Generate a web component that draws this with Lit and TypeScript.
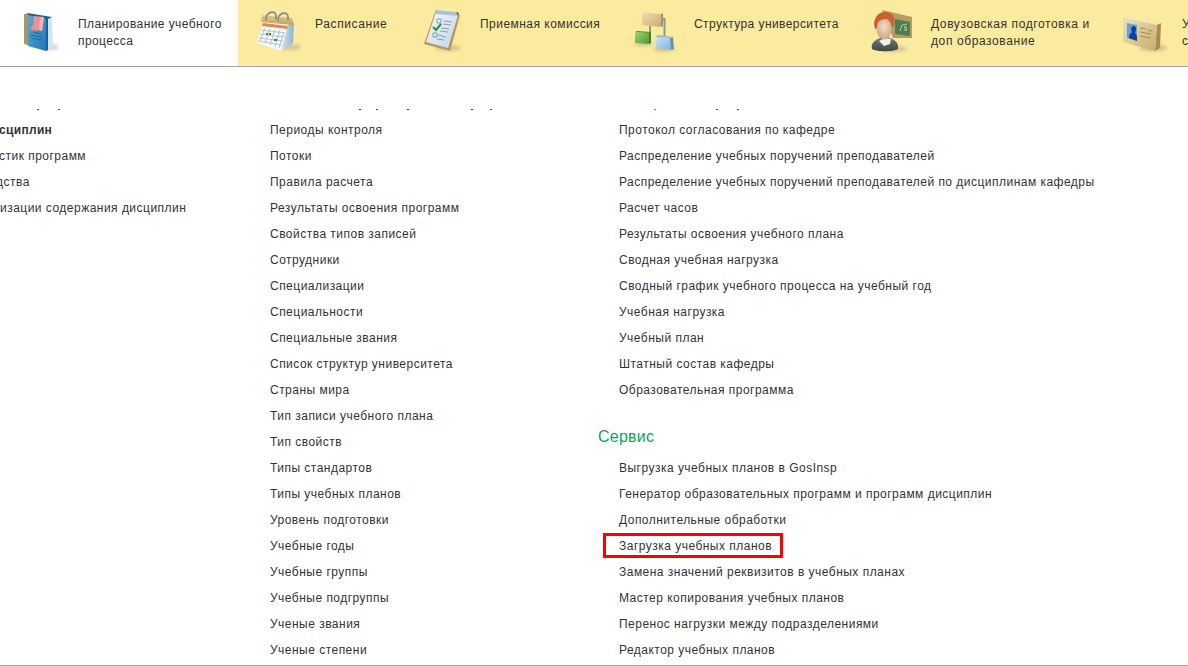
import { LitElement, html, css, svg } from "lit";
import { customElement } from "lit/decorators.js";

const shadow = (cx: number, cy: number, rx: number, ry: number) =>
  svg`<ellipse cx=${cx} cy=${cy} rx=${rx} ry=${ry} fill="#8a8578" opacity=".35" filter="url(#soft)"/>`;

const defs = svg`<defs>
  <filter id="soft" x="-40%" y="-60%" width="180%" height="220%"><feGaussianBlur stdDeviation="1.6"/></filter>
  <linearGradient id="bookBlue" x1="0" y1="0" x2="1" y2="1"><stop offset="0" stop-color="#58a9d6"/><stop offset="1" stop-color="#1f78b4"/></linearGradient>
  <linearGradient id="gold" x1="0" y1="0" x2="0" y2="1"><stop offset="0" stop-color="#e2cb8c"/><stop offset="1" stop-color="#c0a25c"/></linearGradient>
  <linearGradient id="side" x1="0" y1="0" x2="1" y2="0"><stop offset="0" stop-color="#d5e4f2"/><stop offset="1" stop-color="#8eb2d2"/></linearGradient>
  <linearGradient id="green" x1="0" y1="0" x2="1" y2="1"><stop offset="0" stop-color="#9fd66c"/><stop offset="1" stop-color="#4f9a32"/></linearGradient>
  <linearGradient id="blue" x1="0" y1="0" x2="1" y2="1"><stop offset="0" stop-color="#cfe5f7"/><stop offset="1" stop-color="#7fb2dc"/></linearGradient>
  <linearGradient id="tan" x1="0" y1="0" x2="1" y2="1"><stop offset="0" stop-color="#f0e0b0"/><stop offset="1" stop-color="#c7ad70"/></linearGradient>
  <linearGradient id="paper" x1="0" y1="0" x2="1" y2="1"><stop offset="0" stop-color="#f4f8fc"/><stop offset="1" stop-color="#bcd6ec"/></linearGradient>
  <radialGradient id="skin" cx=".5" cy=".4" r=".7"><stop offset="0" stop-color="#f6dcc6"/><stop offset="1" stop-color="#c99a7c"/></radialGradient>
  <linearGradient id="cloth" x1="0" y1="0" x2="0" y2="1"><stop offset="0" stop-color="#757b78"/><stop offset="1" stop-color="#3f4644"/></linearGradient>
</defs>`;

const bookIcon = svg`
  ${shadow(50, 47, 9, 3)}
  <path d="M46 18 52 17 53 46 46 51Z" fill="#d7e4ef"/>
  <path d="M27 13 52 17 46 20 28 16Z" fill="#1b5f9e"/>
  <path d="M24 14 28 14 28 45 24 44Z" fill="#a19a66"/>
  <path d="M28 15 46 19 46 51 28 46Z" fill="url(#bookBlue)"/>
  <path d="M46 19 48 18 48 50 46 51Z" fill="#14609f"/>
  <path d="M30 35 42 37M31 38 42 40M33 32 41 34" stroke="#1a5d92" stroke-width=".8"/>
  <path d="M34 16 44 17 42 31 38 30 36 31 30 29 33 25Z" fill="#f28f8f"/>
  <path d="M40 17 44 17 42 31 39 30Z" fill="#f7b3ad"/>`;

const calIcon = svg`
  ${shadow(290, 47, 11, 3)}
  <path d="M288 24 294 23 293 43 281 51Z" fill="url(#side)"/>
  <path d="M263 22 288 25 281 51 257 43Z" fill="#f5f8fb"/>
  <path d="M263 23 288 26 287 29 262 26Z" fill="#d98a4c"/>
  <g stroke="#a9b8c4" stroke-width=".8" fill="none">
    <path d="M261 30 285 33M260 34 284 37M259 38 283 41M258 41 282 45"/>
    <path d="M265 28 260 41M270 29 265 43M275 30 270 45M280 30 275 47M284 32 279 48"/>
  </g>
  <path d="M266 33h2v2h-2zM269 33h2v2h-2zM274 39h3v2h-3z" fill="#3f8f3a"/>
  <path d="M262 15 292 18 294 25 261 22Z" fill="url(#gold)"/>
  <path d="M266 20c-1-8 10-11 10-4v3M278 21c-1-8 10-11 10-4v3" stroke="#7f8a8f" stroke-width="1.7" fill="none"/>`;

const clipIcon = svg`
  ${shadow(448, 48, 13, 3)}
  <path d="M435 12 460 15 450 51 424 44Z" fill="#c0935e"/>
  <path d="M436 12 458 15 448 48 426 42Z" fill="url(#paper)"/>
  <path d="M435 10 456 12 459 16 435 14Z" fill="#a9c2d6"/>
  <path d="M456 12 459 13 458 16Z" fill="#4c5a60"/>
  <g fill="none" stroke="#7f95a6" stroke-width=".9">
    <path d="M437 19h4v4h-4zM433 33h4v4h-4z"/>
    <path d="M444 21 452 22M443 24 451 25M441 28 449 29M440 31 448 32M438 35 446 37M437 39 444 40"/>
  </g>
  <path d="M433 27 436 30 441 24" fill="none" stroke="#2f8f2b" stroke-width="2"/>`;

const structIcon = svg`
  ${shadow(664, 49, 11, 3)}
  ${shadow(644, 44, 10, 2)}
  <path d="M660 19h4.5v18M650 26v8" fill="none" stroke="#8b979b" stroke-width="2"/>
  <path d="M642 12 661 14 661 27 642 25Z" fill="url(#tan)"/>
  <path d="M661 14 663 13 663 26 661 27Z" fill="#a89260"/>
  <path d="M642 12 644 11 663 13 661 14Z" fill="#f2e6c2"/>
  <path d="M635 32 649 33 649 44 635 43Z" fill="url(#green)"/>
  <path d="M649 33 651 32 651 43 649 44Z" fill="#3d7f28"/>
  <path d="M635 32 637 31 651 32 649 33Z" fill="#4c8f30"/>
  <path d="M655 37 670 38 671 50 656 48Z" fill="url(#blue)"/>
  <path d="M670 38 673 37 674 49 671 50Z" fill="#6c8fa8"/>
  <path d="M655 37 658 35 673 37 670 38Z" fill="#9db9cd"/>`;

const teacherIcon = svg`
  <path d="M882 10 912 17 912 38 893 38Z" fill="#b49b68"/>
  <path d="M895 19 910 22 910 36 895 34Z" fill="#4f7d4c"/>
  <path d="M900 31 902 25 907 24M904 30h3l-3-3h3" stroke="#cfe0c8" stroke-width=".8" fill="none"/>
  ${shadow(893, 49, 14, 3)}
  <path d="M872 49c-2-7 5-10 11-12h4c7 2 12 5 11 12-5 3-21 3-26 0Z" fill="url(#cloth)"/>
  <path d="M879 41 885 38 891 39 890 44 884 46Z" fill="#eef1ee"/>
  <ellipse cx="884" cy="29" rx="7.5" ry="10.5" fill="url(#skin)"/>
  <path d="M875 29c-3-9 2-17 10-17 7 0 11 5 9 13l-2 3c0-5-2-8-5-9-4 0-8 1-9 4-1 2-1 7-3 6Z" fill="#c8622f"/>`;

const cardIcon = svg`
  ${shadow(1153, 48, 14, 3.5)}
  <path d="M1123 18 1127 16 1161 23 1157 25Z" fill="#f3e6bb"/>
  <path d="M1157 25 1161 23 1160 48 1155 51Z" fill="#a88c4f"/>
  <path d="M1123 18 1157 25 1155 51 1123 42Z" fill="url(#tan)"/>
  <path d="M1127 23 1137 25 1137 41 1127 38Z" fill="#5da3dc"/>
  <path d="M1129 38c0-4 2-5 3-6-2-4 0-6 2-6s3 3 1 7c1 1 2 2 2 4v4Z" fill="#173f9a"/>
  <path d="M1140 28 1146 29M1148 30 1152 31M1140 32 1151 34M1140 36 1150 38" stroke="#a48d55" stroke-width="1.1"/>`;

const tabs = [
  { lines: ["Планирование учебного", "процесса"], start: 0, w: 238, ls: 0.42, icon: bookIcon, active: true },
  { lines: ["Расписание"], start: 238, w: 165, ls: 0.62, icon: calIcon },
  { lines: ["Приемная комиссия"], start: 403, w: 214, ls: 0.47, icon: clipIcon },
  { lines: ["Структура университета"], start: 617, w: 237, ls: 0.42, icon: structIcon },
  { lines: ["Довузовская подготовка и", "доп образование"], start: 854, w: 251, ls: 0.6, icon: teacherIcon },
  { lines: ["Учебные", "сотрудники"], start: 1105, w: 180, ls: 0.5, icon: cardIcon },
];

const specks = [
  { x: 37, c: "#3c3c50" }, { x: 58, c: "#3c3c50" }, { x: 359, c: "#3c3c50" }, { x: 376, c: "#3c3c50" },
  { x: 407, c: "#3c3c50" }, { x: 471, c: "#3c3c50" }, { x: 490, c: "#3c3c50" },
  { x: 654, c: "#c0503c" }, { x: 716, c: "#3c3c50" }, { x: 737, c: "#3c3c50" },
];

const left = [
  { t: "сциплин", b: true, m: -1 },
  { t: "стик программ", m: -1 },
  { t: "дства", m: -4 },
  { t: "изации содержания дисциплин", m: 0 },
];
const middle = [
  "Периоды контроля", "Потоки", "Правила расчета", "Результаты освоения программ", "Свойства типов записей",
  "Сотрудники", "Специализации", "Специальности", "Специальные звания", "Список структур университета",
  "Страны мира", "Тип записи учебного плана", "Тип свойств", "Типы стандартов", "Типы учебных планов",
  "Уровень подготовки", "Учебные годы", "Учебные группы", "Учебные подгруппы", "Ученые звания", "Ученые степени",
];
const reports = [
  "Протокол согласования по кафедре", "Распределение учебных поручений преподавателей",
  "Распределение учебных поручений преподавателей по дисциплинам кафедры", "Расчет часов",
  "Результаты освоения учебного плана", "Сводная учебная нагрузка",
  "Сводный график учебного процесса на учебный год", "Учебная нагрузка", "Учебный план",
  "Штатный состав кафедры", "Образовательная программа",
];
const service = [
  "Выгрузка учебных планов в GosInsp", "Генератор образовательных программ и программ дисциплин",
  "Дополнительные обработки", "Загрузка учебных планов", "Замена значений реквизитов в учебных планах",
  "Мастер копирования учебных планов", "Перенос нагрузки между подразделениями", "Редактор учебных планов",
];

@customElement("app-root")
export class AppRoot extends LitElement {
  static styles = css`
    :host { display: block; width: 1188px; height: 666px; overflow: hidden; background: #fff;
      font-family: "Liberation Sans", Arial, sans-serif; font-size: 12px; color: #333; letter-spacing: .48px; }
    .page { height: 666px; display: flex; flex-direction: column; position: relative; }
    .tabs { display: flex; height: 66px; flex: none; background: #faeb9e; border-bottom: 1px solid #a5a5a5; overflow: hidden; }
    .tab { display: flex; flex: none; white-space: nowrap; line-height: 17px; }
    .tab.active { background: #fff; }
    .tab svg { flex: none; display: block; width: 77px; height: 66px; }
    .tab.active svg { width: 78px; }
    .label { padding-top: 16px; }
    .label div { height: 17px; }
    .main { flex: 1; min-height: 0; overflow: hidden; display: flex; padding-top: 50px; border-bottom: 1px solid #a5a5a5; }
    .col-left { width: 270px; flex: none; overflow: hidden; }
    .col-mid { width: 329px; flex: none; }
    .col-right { flex: 1; min-width: 0; }
    .row { height: 26px; line-height: 26px; white-space: nowrap; }
    .col-right .row { padding-left: 20px; }
    .row.bold { font-weight: 700; letter-spacing: .32px; }
    .row span { position: relative; display: inline-block; }
    .row.hl span::after { content: ""; position: absolute; left: -16px; top: 0; right: -11px; height: 25px;
      border: 3px solid #f00; box-sizing: border-box; }
    h2 { margin: 0 0 0 -1px; padding: 22px 0 6px; font-weight: 400; font-size: 16px; line-height: 24px; color: #0fa35a; letter-spacing: .25px; }
    .speck { position: absolute; top: 109px; width: 2px; height: 1px; }
  `;

  render() {
    return html`<div class="page">
      <div class="tabs">
        ${tabs.map((t) => html`<div class="tab ${t.active ? "active" : ""}" style="width:${t.w}px;letter-spacing:${t.ls}px">
          <svg viewBox="${t.start} 0 ${t.active ? 78 : 77} 66">${t.active ? defs : ""}${t.icon}</svg>
          <div class="label">${t.lines.map((l) => html`<div>${l}</div>`)}</div>
        </div>`)}
      </div>
      <div class="main">
        <div class="col-left">${left.map((r) => html`<div class="row ${r.b ? "bold" : ""}" style="margin-left:${r.m}px">${r.t}</div>`)}</div>
        <div class="col-mid">${middle.map((r) => html`<div class="row">${r}</div>`)}</div>
        <div class="col-right">
          ${reports.map((r) => html`<div class="row">${r}</div>`)}
          <h2>Сервис</h2>
          ${service.map((r) => html`<div class="row ${r === "Загрузка учебных планов" ? "hl" : ""}"><span>${r}</span></div>`)}
        </div>
      </div>
      ${specks.map((s) => html`<i class="speck" style="left:${s.x}px;background:${s.c}"></i>`)}
    </div>`;
  }
}
